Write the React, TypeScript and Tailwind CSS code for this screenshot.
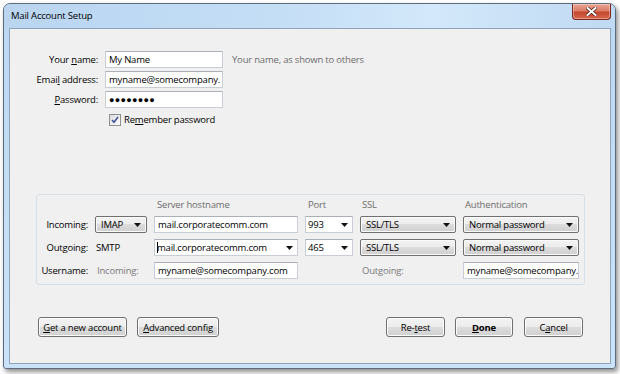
import type { ReactNode } from "react";

const Arrow = () => (
  <svg width="7" height="4" viewBox="0 0 7 4" className="shrink-0">
    <path d="M0 0h7L3.5 4z" fill="#111" />
  </svg>
);

const TextBox = ({ children, className = "" }: { children?: ReactNode; className?: string }) => (
  <div
    className={`h-[17px] flex items-center px-[3px] bg-white border border-[#c9ced6] border-t-[#abb0b8] overflow-hidden whitespace-nowrap ${className}`}
  >
    {children}
  </div>
);

const ComboBox = ({ children }: { children: ReactNode }) => (
  <div className="h-[17px] flex items-center justify-between pl-[2px] pr-[4px] bg-white border border-[#c9ced6] border-t-[#abb0b8] whitespace-nowrap">
    <span className="flex items-center">{children}</span>
    <Arrow />
  </div>
);

const Select = ({ children }: { children: ReactNode }) => (
  <div className="h-[17px] flex items-center justify-between pl-[5px] pr-[5px] rounded-[2px] border border-[#707070] bg-[linear-gradient(#f3f3f3_0%,#ececec_50%,#dcdcdc_50%,#d0d0d0_100%)] shadow-[inset_0_0_0_1px_#fbfbfb] whitespace-nowrap">
    <span>{children}</span>
    <Arrow />
  </div>
);

const Button = ({ children, className = "" }: { children: ReactNode; className?: string }) => (
  <button
    className={`h-[20px] flex items-center justify-center rounded-[3px] border border-[#707070] bg-[linear-gradient(#f3f3f3_0%,#ececec_50%,#dddddd_50%,#d0d0d0_100%)] shadow-[inset_0_0_0_1px_#fcfcfc] text-black whitespace-nowrap ${className}`}
  >
    {children}
  </button>
);

export default function App() {
  return (
    <div className="w-[620px] h-[374px] bg-white pl-[3px] pt-[3px] font-['Open_Sans',sans-serif] text-[9.5px] tracking-[-0.2px] leading-[13px] text-black">
      {/* window */}
      <div className="relative w-[613px] h-[366px] flex flex-col rounded-t-[7px] rounded-b-[3px] border border-[#5d6c7c] bg-[linear-gradient(#bcd7f1_0%,#c2dcf4_40%,#cbe3f8_100%)] shadow-[2px_3px_5px_rgba(0,0,0,0.45)]">
        {/* title bar */}
        <div className="h-[24px] flex items-center pl-[7px] pb-[1px] bg-[linear-gradient(90deg,#b9d5f0_0%,#c4def6_45%,#d3e8fa_70%,#c0daf3_100%)] rounded-t-[6px]">
          <span className="text-[9.5px]">Mail Account Setup</span>
        </div>
        <div className="absolute right-[4px] top-0 w-[39px] h-[16px] flex items-center justify-center rounded-b-[4px] border border-t-0 border-[#7c2a1f] bg-[linear-gradient(#e9a593_0%,#dc7d66_45%,#c5472f_55%,#d8664a_100%)] shadow-[inset_0_0_0_1px_rgba(255,255,255,0.35)]">
          <svg width="11" height="9" viewBox="0 0 11 9">
            <path d="M1.5 1L9.5 8M9.5 1L1.5 8" stroke="#4a1a12" strokeWidth="3.4" strokeLinecap="square" />
            <path d="M1.5 1L9.5 8M9.5 1L1.5 8" stroke="#fff" strokeWidth="2" strokeLinecap="square" />
          </svg>
        </div>

        {/* client area */}
        <div className="ml-[5px] mr-[4px] h-[336px] border border-[#8fa4ba] bg-[#f0f0f0] flex flex-col">
          {/* identity form */}
          <div className="pt-[22px] grid grid-cols-[88px_118px_auto] gap-x-[7px] gap-y-[3px] items-center whitespace-nowrap">
            <div className="text-right">
              Your <u>n</u>ame:
            </div>
            <TextBox>My Name</TextBox>
            <div className="pl-[2px] text-[#6d6d6d]">Your name, as shown to others</div>

            <div className="text-right">
              Emai<u>l</u> address:
            </div>
            <TextBox>myname@somecompany.</TextBox>
            <div />

            <div className="text-right">
              <u>P</u>assword:
            </div>
            <TextBox className="text-[9px] tracking-[0.3px]">●●●●●●●●</TextBox>
            <div />

            <div />
            <div className="mt-[2px] pl-[4px] flex items-center gap-[3px]">
              <div className="w-[12px] h-[12px] flex items-center justify-center border border-[#8e8f8f] bg-[linear-gradient(135deg,#dcdcdc,#fdfdfd)]">
                <svg width="8" height="8" viewBox="0 0 8 8">
                  <path d="M1 4l2 2.3L7 1" fill="none" stroke="#3c5296" strokeWidth="1.5" />
                </svg>
              </div>
              <span>
                Re<u>m</u>ember password
              </span>
            </div>
            <div />
          </div>

          {/* server settings group */}
          <div className="mt-[68px] ml-[26px] w-[549px] rounded-[3px] border border-[#d5dfe5] pt-[3px] pb-[5px] grid grid-cols-[51px_52px_144px_48px_96px_116px] grid-rows-[12px_17px_17px_17px] gap-x-[7px] gap-y-[6px] items-center whitespace-nowrap">
            <div />
            <div />
            <div className="pl-[3px] text-[#6d6d6d]">Server hostname</div>
            <div className="pl-[3px] text-[#6d6d6d]">Port</div>
            <div className="pl-[2px] text-[#6d6d6d]">SSL</div>
            <div className="pl-[2px] text-[#6d6d6d]">Authentication</div>

            <div className="text-right">Incoming:</div>
            <Select>IMAP</Select>
            <TextBox>mail.corporatecomm.com</TextBox>
            <ComboBox>993</ComboBox>
            <Select>SSL/TLS</Select>
            <Select>Normal password</Select>

            <div className="text-right">Outgoing:</div>
            <div className="pl-[1px]">SMTP</div>
            <ComboBox>
              <span className="w-px h-[11px] bg-black" />
              <span className="-ml-px">mail.corporatecomm.com</span>
            </ComboBox>
            <ComboBox>465</ComboBox>
            <Select>SSL/TLS</Select>
            <Select>Normal password</Select>

            <div className="text-right">Username:</div>
            <div className="pl-[2px] text-[#7a7a7a]">Incoming:</div>
            <TextBox>myname@somecompany.com</TextBox>
            <div />
            <div className="pl-[2px] text-[#7a7a7a]">Outgoing:</div>
            <TextBox>myname@somecompany.com</TextBox>
          </div>

          {/* buttons */}
          <div className="mt-[32px] pl-[28px] pr-[27px] flex items-center">
            <Button className="w-[89px]">
              <u>G</u>et a new account
            </Button>
            <Button className="w-[82px] ml-[10px]">
              <u>A</u>dvanced config
            </Button>
            <div className="flex-1" />
            <Button className="w-[59px]">
              Re-<u>t</u>est
            </Button>
            <Button className="w-[58px] ml-[10px] font-bold">
              <u>D</u>one
            </Button>
            <Button className="w-[59px] ml-[11px]">
              C<u>a</u>ncel
            </Button>
          </div>
        </div>
      </div>
    </div>
  );
}
